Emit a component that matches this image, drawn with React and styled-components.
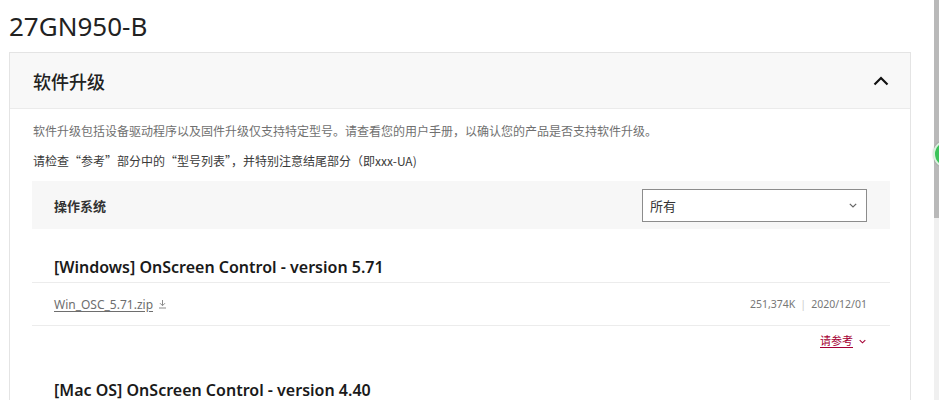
import React from "react";
import styled, { createGlobalStyle } from "styled-components";

const Global = createGlobalStyle`
  html, body { margin: 0; padding: 0; background: #fff; overflow: hidden; }
  body { font-family: "Noto Sans", "Noto Sans CJK SC", sans-serif; color: #333; }
  * { box-sizing: border-box; }
`;

const Shell = styled.div`
  display: flex;
  width: 939px;
  height: 400px;
  overflow: hidden;
  position: relative;
`;

const Main = styled.main`
  flex: 1;
  padding: 0 23px 0 9px;
  min-width: 0;
`;

const ScrollBar = styled.div`
  width: 5px;
  display: flex;
  flex-direction: column;
  background: #f0f0f0;
`;

const Thumb = styled.div`
  height: 218px;
  background: #b9b9b9;
`;

const Bubble = styled.div`
  position: absolute;
  left: 933px;
  top: 140px;
  width: 28px;
  height: 28px;
  border-radius: 50%;
  background: #3cc35a;
  border: 2px solid #d8f1dd;
  box-shadow: 0 0 2px rgba(0,0,0,0.25);
`;

const Title = styled.h1`
  margin: 0 0 10px;
  padding-top: 10px;
  font-size: 26px;
  line-height: 32px;
  font-weight: 400;
  color: #222;
`;

const Card = styled.section`
  border: 1px solid #e4e4e4;
  border-bottom: none;
`;

const CardHeader = styled.div`
  height: 56px;
  background: #f8f8f8;
  border-bottom: 1px solid #ebebeb;
  display: flex;
  align-items: center;
  justify-content: space-between;
  padding: 0 21px 0 23px;
`;

const CardTitle = styled.h2`
  margin: 0;
  font-size: 18px;
  font-weight: 500;
  color: #222;
`;

const CardBody = styled.div`
  padding: 12px 20px 0 22px;
`;

const Note = styled.p`
  margin: 0 0 10px 1px;
  font-family: "Noto Sans CJK SC", "Noto Sans", sans-serif;
  font-size: 12px;
  line-height: 20px;
  color: ${(p) => (p.$strong ? "#3a3a3a" : "#707070")};
`;

const FilterBar = styled.div`
  height: 48px;
  background: #f7f7f7;
  display: flex;
  align-items: center;
  justify-content: space-between;
  padding: 0 23px 0 22px;
`;

const FilterLabel = styled.span`
  font-size: 13px;
  font-weight: 600;
  color: #333;
`;

const Select = styled.div`
  width: 225px;
  height: 33px;
  background: #fff;
  border: 1px solid #8c8c8c;
  display: flex;
  align-items: center;
  justify-content: space-between;
  padding: 0 9px 0 7px;
  font-size: 13px;
  color: #333;
`;

const Release = styled.article``;

const ReleaseTitle = styled.h3`
  margin: 0;
  padding: ${(p) => (p.$first ? "26px" : "27px")} 22px 3px;
  font-size: 16px;
  line-height: 24px;
  font-weight: 600;
  color: #1a1a1a;
  white-space: nowrap;
`;

const FileRow = styled.div`
  height: 44px;
  border-top: 1px solid #ececec;
  border-bottom: 1px solid #ececec;
  display: flex;
  align-items: center;
  justify-content: space-between;
  padding: 0 23px 0 22px;
`;

const FileLink = styled.a`
  display: inline-flex;
  align-items: center;
  gap: 5px;
  font-size: 12px;
  color: #6e6e6e;
  text-decoration: none;
  span { text-decoration: underline; text-underline-offset: 2px; }
`;

const Meta = styled.div`
  font-size: 10.5px;
  color: #777;
  display: flex;
  align-items: center;
  gap: 5px;
`;

const Sep = styled.span`
  color: #ccc;
`;

const RefRow = styled.div`
  display: flex;
  justify-content: flex-end;
  padding: 5px 24px 0 22px;
  line-height: 20px;
`;

const RefLink = styled.a`
  display: inline-flex;
  align-items: center;
  gap: 6px;
  font-size: 11px;
  color: #a50034;
  span { text-decoration: underline; text-underline-offset: 2px; }
`;

const ChevronUp = () => (
  <svg width="16" height="10" viewBox="0 0 16 10">
    <path d="M1.5 8.5 L8 2 L14.5 8.5" fill="none" stroke="#111" strokeWidth="2.2" />
  </svg>
);

const ChevronDown = ({ color = "#666", w = 8, h = 5 }) => (
  <svg width={w} height={h} viewBox="0 0 8 5">
    <path d="M0.8 0.8 L4 4 L7.2 0.8" fill="none" stroke={color} strokeWidth="1.2" />
  </svg>
);

const DownloadIcon = () => (
  <svg width="9" height="10" viewBox="0 0 9 10">
    <path d="M4.5 1 V6.5 M2 4.2 L4.5 6.7 L7 4.2 M1 9 H8" fill="none" stroke="#8a8a8a" strokeWidth="1" />
  </svg>
);

export default function App() {
  return (
    <Shell>
      <Global />
      <Main>
        <Title>27GN950-B</Title>
        <Card>
          <CardHeader>
            <CardTitle>软件升级</CardTitle>
            <ChevronUp />
          </CardHeader>
          <CardBody>
            <Note>软件升级包括设备驱动程序以及固件升级仅支持特定型号。请查看您的用户手册，以确认您的产品是否支持软件升级。</Note>
            <Note $strong>请检查“参考”部分中的“型号列表”，并特别注意结尾部分（即xxx-UA)</Note>
            <FilterBar>
              <FilterLabel>操作系统</FilterLabel>
              <Select>
                <span>所有</span>
                <ChevronDown />
              </Select>
            </FilterBar>
            <Release>
              <ReleaseTitle $first>[Windows] OnScreen Control - version 5.71</ReleaseTitle>
              <FileRow>
                <FileLink>
                  <span>Win_OSC_5.71.zip</span>
                  <DownloadIcon />
                </FileLink>
                <Meta>
                  <span>251,374K</span>
                  <Sep>|</Sep>
                  <span>2020/12/01</span>
                </Meta>
              </FileRow>
              <RefRow>
                <RefLink>
                  <span>请参考</span>
                  <ChevronDown color="#a50034" w={7} h={5} />
                </RefLink>
              </RefRow>
            </Release>
            <Release>
              <ReleaseTitle>[Mac OS] OnScreen Control - version 4.40</ReleaseTitle>
            </Release>
          </CardBody>
        </Card>
      </Main>
      <ScrollBar>
        <Thumb />
      </ScrollBar>
      <Bubble />
    </Shell>
  );
}
